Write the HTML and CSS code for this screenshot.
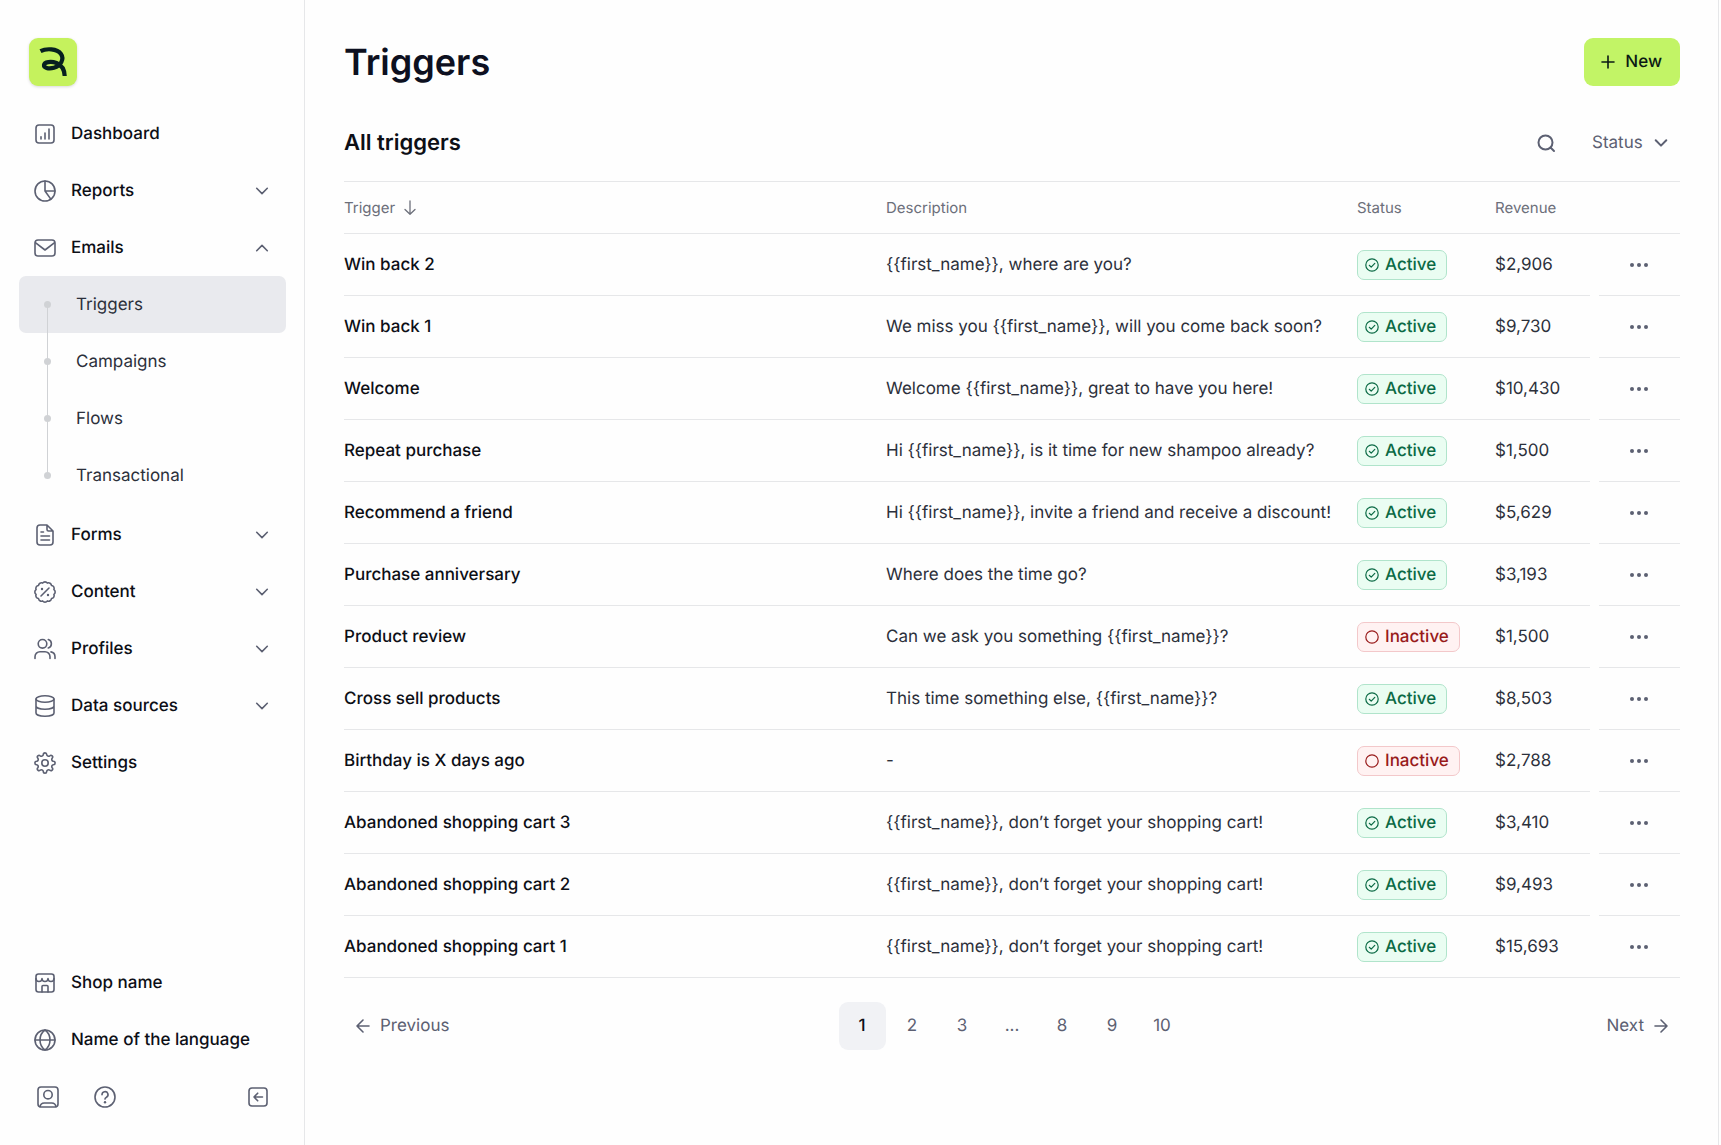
FILE: index.html
```
<!DOCTYPE html>
<html lang="en">
<head>
    <meta charset="UTF-8">
    <meta name="viewport" content="width=device-width, initial-scale=1.0">
    <title>Triggers</title>
    <link rel="stylesheet" href="styles.css">
</head>
<body>
    <!-- icon sprite -->
    <svg class="sprite" aria-hidden="true">
        <symbol id="i-dashboard" viewBox="0 0 24 24"><rect x="3" y="3" width="18" height="18" rx="3"/><path d="M8 14.8V17M12 11v6M16 7v10"/></symbol>
        <symbol id="i-reports" viewBox="0 0 24 24"><circle cx="12" cy="12" r="10"/><path d="M12 2v10h10M12 12l5.8 8.1"/></symbol>
        <symbol id="i-mail" viewBox="0 0 24 24"><rect x="2" y="4" width="20" height="16" rx="3"/><path d="M2.7 6.8 12 14l9.3-7.2"/></symbol>
        <symbol id="i-file" viewBox="0 0 24 24"><path d="M14 2H7a3 3 0 0 0-3 3v14a3 3 0 0 0 3 3h10a3 3 0 0 0 3-3V8zM14 2v4.5A1.5 1.5 0 0 0 15.5 8H20M8 9h2.5M8 13h8.5M8 17h8.5"/></symbol>
        <symbol id="i-percent" viewBox="0 0 24 24"><path d="M20.9 9.6A2.9 2.9 0 0 1 20.9 14.4A2.9 2.9 0 0 1 18.5 18.5A2.9 2.9 0 0 1 14.4 20.9A2.9 2.9 0 0 1 9.6 20.9A2.9 2.9 0 0 1 5.5 18.5A2.9 2.9 0 0 1 3.1 14.4A2.9 2.9 0 0 1 3.1 9.6A2.9 2.9 0 0 1 5.5 5.5A2.9 2.9 0 0 1 9.6 3.1A2.9 2.9 0 0 1 14.4 3.1A2.9 2.9 0 0 1 18.5 5.5A2.9 2.9 0 0 1 20.9 9.6zM8 16l8-8"/><path class="dots" d="M9 9h.01M15 15h.01"/></symbol>
        <symbol id="i-users" viewBox="0 0 24 24"><circle cx="9.5" cy="6.8" r="4.3"/><path d="M15.3 2.6a4.4 4.4 0 0 1 0 8.4M2 21.5v-1.8a5 5 0 0 1 5-5h5a5 5 0 0 1 5 5v1.8M18 14.9a5 5 0 0 1 4 4.8v1.8"/></symbol>
        <symbol id="i-database" viewBox="0 0 24 24"><ellipse cx="12" cy="5" rx="9" ry="3.2"/><path d="M3 5v14c0 1.800 4 3.200 9 3.200s9-1.400 9-3.200V5M3 12c0 1.800 4 3.200 9 3.200s9-1.400 9-3.200"/></symbol>
        <symbol id="i-gear" viewBox="0 0 24 24"><circle cx="12" cy="12" r="3.2"/><path d="M20.4 10.3A1.7 1.7 0 0 1 20.4 13.7A1.9 1.9 0 0 0 19.2 16.8A1.7 1.7 0 0 1 16.8 19.2A1.9 1.9 0 0 0 13.7 20.4A1.7 1.7 0 0 1 10.3 20.4A1.9 1.9 0 0 0 7.2 19.2A1.7 1.7 0 0 1 4.8 16.8A1.9 1.9 0 0 0 3.6 13.7A1.7 1.7 0 0 1 3.6 10.3A1.9 1.9 0 0 0 4.8 7.2A1.7 1.7 0 0 1 7.2 4.8A1.9 1.9 0 0 0 10.3 3.6A1.7 1.7 0 0 1 13.7 3.6A1.9 1.9 0 0 0 16.8 4.8A1.7 1.7 0 0 1 19.2 7.2A1.9 1.9 0 0 0 20.4 10.3z"/></symbol>
        <symbol id="i-shop" viewBox="0 0 24 24"><rect x="3" y="3" width="18" height="18" rx="2.5"/><path d="M3 7.500a3 3 0 0 0 6 0 3 3 0 0 0 6 0 3 3 0 0 0 6 0M9 21v-5.500a1 1 0 0 1 1-1h4a1 1 0 0 1 1 1V21"/></symbol>
        <symbol id="i-globe" viewBox="0 0 24 24"><circle cx="12" cy="12" r="10"/><path d="M2 12h20M12 2c3.500 2.500 5 6 5 10s-1.500 7.500-5 10c-3.500-2.500-5-6-5-10s1.500-7.500 5-10z"/></symbol>
        <symbol id="i-account" viewBox="0 0 24 24"><rect x="2" y="2" width="20" height="20" rx="3"/><circle cx="12" cy="9.7" r="4.2"/><path d="M4 21.700A4.500 4.500 0 0 1 8.200 18h7.600a4.500 4.500 0 0 1 4.200 3.700"/></symbol>
        <symbol id="i-help" viewBox="0 0 24 24"><circle cx="12" cy="12" r="10"/><path d="M9 9.700a3 3 0 1 1 4.500 2.500c-.9.500-1.500 1-1.500 1.900"/><path class="dots" d="M12 17.200h.01"/></symbol>
        <symbol id="i-collapse" viewBox="0 0 24 24"><rect x="3" y="3" width="18" height="18" rx="3"/><path d="M16.5 12H8M11.7 8.200 8 12l3.700 3.800"/></symbol>
        <symbol id="i-down" viewBox="0 0 24 24"><path d="M6.700 9.300 12 14.600l5.300-5.300"/></symbol>
        <symbol id="i-up" viewBox="0 0 24 24"><path d="M6.700 14.700 12 9.400l5.300 5.300"/></symbol>
        <symbol id="i-plus" viewBox="0 0 14 14"><path d="M7 1v12M1 7h12"/></symbol>
        <symbol id="i-search" viewBox="0 0 24 24"><circle cx="11.5" cy="11.5" r="7"/><path d="M16.5 16.5l3.500 3.500"/></symbol>
        <symbol id="i-sort" viewBox="0 0 14 16"><path d="M7 1v13M2 9.500 7 14.300l5-4.800"/></symbol>
        <symbol id="i-check" viewBox="0 0 14 14"><circle cx="7" cy="7" r="6.2"/><path d="M4.300 7.300l1.900 1.800 3.600-3.700"/></symbol>
        <symbol id="i-circle" viewBox="0 0 14 14"><circle cx="7" cy="7" r="6.2"/></symbol>
        <symbol id="i-more" viewBox="0 0 20 6"><circle cx="3" cy="3" r="2"/><circle cx="10" cy="3" r="2"/><circle cx="17" cy="3" r="2"/></symbol>
        <symbol id="i-left" viewBox="0 0 14 14"><path d="M13 7H1M7 1 1 7l6 6"/></symbol>
        <symbol id="i-right" viewBox="0 0 14 14"><path d="M1 7h12M7 1l6 6-6 6"/></symbol>
    </svg>

    <div class="app">
        <aside class="sidebar">
            <a class="logo" href="#" aria-label="Home">
                <svg viewBox="0 0 48 48"><path d="M11.500 13.200C17 10.300 28 10.300 32 16c3.500 5-.2 12-7 13.800-6 1.500-10.300-.3-10-2.800.4-3 7-4 12.500-2 5.500 2.200 8 7 8.200 13"/></svg>
            </a>
            <nav class="nav">
                <a class="nav-item" href="#"><svg class="icon"><use href="#i-dashboard"/></svg>Dashboard</a>
                <button class="nav-item" type="button"><svg class="icon"><use href="#i-reports"/></svg>Reports<svg class="icon chevron"><use href="#i-down"/></svg></button>
                <button class="nav-item" type="button" aria-expanded="true"><svg class="icon"><use href="#i-mail"/></svg>Emails<svg class="icon chevron"><use href="#i-up"/></svg></button>
                <div class="subnav">
                    <a class="sub-item selected" href="#">Triggers</a>
                    <a class="sub-item" href="#">Campaigns</a>
                    <a class="sub-item" href="#">Flows</a>
                    <a class="sub-item" href="#">Transactional</a>
                </div>
                <button class="nav-item" type="button"><svg class="icon"><use href="#i-file"/></svg>Forms<svg class="icon chevron"><use href="#i-down"/></svg></button>
                <button class="nav-item" type="button"><svg class="icon"><use href="#i-percent"/></svg>Content<svg class="icon chevron"><use href="#i-down"/></svg></button>
                <button class="nav-item" type="button"><svg class="icon"><use href="#i-users"/></svg>Profiles<svg class="icon chevron"><use href="#i-down"/></svg></button>
                <button class="nav-item" type="button"><svg class="icon"><use href="#i-database"/></svg>Data sources<svg class="icon chevron"><use href="#i-down"/></svg></button>
                <a class="nav-item" href="#"><svg class="icon"><use href="#i-gear"/></svg>Settings</a>
            </nav>
            <div class="sidebar-bottom">
                <button class="nav-item" type="button"><svg class="icon"><use href="#i-shop"/></svg>Shop name</button>
                <button class="nav-item" type="button"><svg class="icon"><use href="#i-globe"/></svg>Name of the language</button>
                <div class="tools">
                    <button class="tool" type="button" aria-label="Account"><svg class="icon"><use href="#i-account"/></svg></button>
                    <button class="tool" type="button" aria-label="Help"><svg class="icon"><use href="#i-help"/></svg></button>
                    <button class="tool collapse" type="button" aria-label="Collapse sidebar"><svg class="icon"><use href="#i-collapse"/></svg></button>
                </div>
            </div>
        </aside>

        <main class="main">
            <header class="page-header">
                <h1>Triggers</h1>
                <button class="btn-new" type="button"><svg class="icon-sm"><use href="#i-plus"/></svg>New</button>
            </header>

            <div class="toolbar">
                <h2>All triggers</h2>
                <button class="btn-search" type="button" aria-label="Search"><svg class="icon"><use href="#i-search"/></svg></button>
                <div class="filter">
                    <select aria-label="Filter by status">
                        <option>Status</option>
                        <option>Active</option>
                        <option>Inactive</option>
                    </select>
                    <svg class="icon"><use href="#i-down"/></svg>
                </div>
            </div>

            <table class="triggers">
                <thead>
                    <tr>
                        <th class="col-name"><button class="sort" type="button">Trigger<svg><use href="#i-sort"/></svg></button></th>
                        <th class="col-desc">Description</th>
                        <th class="col-status">Status</th>
                        <th class="col-revenue">Revenue</th>
                        <th class="col-menu"></th>
                    </tr>
                </thead>
                <tbody>
                    <tr>
                        <td class="name">Win back 2</td>
                        <td>{{first_name}}, where are you?</td>
                        <td><span class="badge active"><svg class="icon-sm"><use href="#i-check"/></svg>Active</span></td>
                        <td class="revenue">$2,906</td>
                        <td class="menu"><button type="button" aria-label="More"><svg><use href="#i-more"/></svg></button></td>
                    </tr>
                    <tr>
                        <td class="name">Win back 1</td>
                        <td>We miss you {{first_name}}, will you come back soon?</td>
                        <td><span class="badge active"><svg class="icon-sm"><use href="#i-check"/></svg>Active</span></td>
                        <td class="revenue">$9,730</td>
                        <td class="menu"><button type="button" aria-label="More"><svg><use href="#i-more"/></svg></button></td>
                    </tr>
                    <tr>
                        <td class="name">Welcome</td>
                        <td>Welcome {{first_name}}, great to have you here!</td>
                        <td><span class="badge active"><svg class="icon-sm"><use href="#i-check"/></svg>Active</span></td>
                        <td class="revenue">$10,430</td>
                        <td class="menu"><button type="button" aria-label="More"><svg><use href="#i-more"/></svg></button></td>
                    </tr>
                    <tr>
                        <td class="name">Repeat purchase</td>
                        <td>Hi {{first_name}}, is it time for new shampoo already?</td>
                        <td><span class="badge active"><svg class="icon-sm"><use href="#i-check"/></svg>Active</span></td>
                        <td class="revenue">$1,500</td>
                        <td class="menu"><button type="button" aria-label="More"><svg><use href="#i-more"/></svg></button></td>
                    </tr>
                    <tr>
                        <td class="name">Recommend a friend</td>
                        <td>Hi {{first_name}}, invite a friend and receive a discount!</td>
                        <td><span class="badge active"><svg class="icon-sm"><use href="#i-check"/></svg>Active</span></td>
                        <td class="revenue">$5,629</td>
                        <td class="menu"><button type="button" aria-label="More"><svg><use href="#i-more"/></svg></button></td>
                    </tr>
                    <tr>
                        <td class="name">Purchase anniversary</td>
                        <td>Where does the time go?</td>
                        <td><span class="badge active"><svg class="icon-sm"><use href="#i-check"/></svg>Active</span></td>
                        <td class="revenue">$3,193</td>
                        <td class="menu"><button type="button" aria-label="More"><svg><use href="#i-more"/></svg></button></td>
                    </tr>
                    <tr>
                        <td class="name">Product review</td>
                        <td>Can we ask you something {{first_name}}?</td>
                        <td><span class="badge inactive"><svg class="icon-sm"><use href="#i-circle"/></svg>Inactive</span></td>
                        <td class="revenue">$1,500</td>
                        <td class="menu"><button type="button" aria-label="More"><svg><use href="#i-more"/></svg></button></td>
                    </tr>
                    <tr>
                        <td class="name">Cross sell products</td>
                        <td>This time something else, {{first_name}}?</td>
                        <td><span class="badge active"><svg class="icon-sm"><use href="#i-check"/></svg>Active</span></td>
                        <td class="revenue">$8,503</td>
                        <td class="menu"><button type="button" aria-label="More"><svg><use href="#i-more"/></svg></button></td>
                    </tr>
                    <tr>
                        <td class="name">Birthday is X days ago</td>
                        <td>-</td>
                        <td><span class="badge inactive"><svg class="icon-sm"><use href="#i-circle"/></svg>Inactive</span></td>
                        <td class="revenue">$2,788</td>
                        <td class="menu"><button type="button" aria-label="More"><svg><use href="#i-more"/></svg></button></td>
                    </tr>
                    <tr>
                        <td class="name">Abandoned shopping cart 3</td>
                        <td>{{first_name}}, don’t forget your shopping cart!</td>
                        <td><span class="badge active"><svg class="icon-sm"><use href="#i-check"/></svg>Active</span></td>
                        <td class="revenue">$3,410</td>
                        <td class="menu"><button type="button" aria-label="More"><svg><use href="#i-more"/></svg></button></td>
                    </tr>
                    <tr>
                        <td class="name">Abandoned shopping cart 2</td>
                        <td>{{first_name}}, don’t forget your shopping cart!</td>
                        <td><span class="badge active"><svg class="icon-sm"><use href="#i-check"/></svg>Active</span></td>
                        <td class="revenue">$9,493</td>
                        <td class="menu"><button type="button" aria-label="More"><svg><use href="#i-more"/></svg></button></td>
                    </tr>
                    <tr>
                        <td class="name">Abandoned shopping cart 1</td>
                        <td>{{first_name}}, don’t forget your shopping cart!</td>
                        <td><span class="badge active"><svg class="icon-sm"><use href="#i-check"/></svg>Active</span></td>
                        <td class="revenue">$15,693</td>
                        <td class="menu"><button type="button" aria-label="More"><svg><use href="#i-more"/></svg></button></td>
                    </tr>
                </tbody>
            </table>

            <nav class="pagination" aria-label="Pagination">
                <a class="step" href="#"><svg class="icon-sm"><use href="#i-left"/></svg>Previous</a>
                <div class="pages">
                    <a class="page current" href="#">1</a>
                    <a class="page" href="#">2</a>
                    <a class="page" href="#">3</a>
                    <span class="page">...</span>
                    <a class="page" href="#">8</a>
                    <a class="page" href="#">9</a>
                    <a class="page" href="#">10</a>
                </div>
                <a class="step next" href="#">Next<svg class="icon-sm"><use href="#i-right"/></svg></a>
            </nav>
        </main>
    </div>
</body>
</html>
```

FILE: styles.css
```
* {
    box-sizing: border-box;
}
body {
    margin: 0;
    font-family: Inter, sans-serif;
    font-size: 17px;
    line-height: 24px;
    text-rendering: geometricPrecision;
    color: #2c303b;
    background-color: #fefefe;
}
button, select {
    font: inherit;
    color: inherit;
    text-rendering: inherit;
    background: none;
    border: none;
    margin: 0;
    padding: 0;
    cursor: pointer;
}
a {
    color: inherit;
    text-decoration: none;
}
svg {
    display: block;
    flex-shrink: 0;
    fill: none;
    stroke: currentColor;
    stroke-width: 1.6;
    stroke-linecap: round;
    stroke-linejoin: round;
}
.sprite {
    position: absolute;
    width: 0;
    height: 0;
}
.dots {
    stroke-width: 2.4;
}
.icon {
    width: 24px;
    height: 24px;
    color: #5c6072;
}
.icon-sm {
    width: 14px;
    height: 14px;
}
.app {
    display: flex;
    min-height: 100vh;
    margin-right: 2px;
    border-right: 1px solid #e6e7e9;
}

/* sidebar */
.sidebar {
    display: flex;
    flex-direction: column;
    flex-shrink: 0;
    width: 305px;
    padding: 38px 18px 20px 19px;
    border-right: 1px solid #e6e7e9;
}
.logo {
    width: 48px;
    height: 48px;
    margin: 0 0 19px 10px;
    border-radius: 9px;
    background-color: #c5f25d;
    box-shadow: 0 1px 3px rgba(0, 0, 0, 0.15);
}
.logo svg {
    color: #06201f;
    stroke-width: 4.2;
    stroke-linecap: butt;
}
.nav-item {
    display: flex;
    align-items: center;
    gap: 14px;
    width: 100%;
    height: 57px;
    padding: 0 12px 0 14px;
    border-radius: 7px;
    font-weight: 500;
    color: #0d0f16;
    text-align: left;
}
.chevron {
    margin-left: auto;
}
.subnav {
    padding-bottom: 2px;
}
.sub-item {
    position: relative;
    display: flex;
    align-items: center;
    height: 57px;
    padding-left: 57px;
    border-radius: 7px;
}
.sub-item.selected {
    background-color: #e9eaee;
}
.sub-item::before {
    content: "";
    position: absolute;
    left: 25px;
    top: 25px;
    width: 7px;
    height: 7px;
    border-radius: 50%;
    background-color: #d0d2d5;
}
.sub-item:not(:last-child)::after {
    content: "";
    position: absolute;
    left: 28px;
    top: 28px;
    z-index: 1;
    width: 1px;
    height: 57px;
    background-color: #d0d2d5;
}
.sidebar-bottom {
    margin-top: auto;
}
.tools {
    display: flex;
}
.tool {
    display: flex;
    align-items: center;
    justify-content: center;
    width: 57px;
    height: 57px;
}
.collapse {
    margin-left: auto;
}

/* main column */
.main {
    flex: 1;
    min-width: 0;
    padding: 38px 38px 38px 39px;
}
.page-header {
    display: flex;
    align-items: center;
    justify-content: space-between;
    height: 48px;
    margin-bottom: 19px;
}
h1 {
    margin: 0;
    font-size: 36px;
    line-height: 48px;
    font-weight: 600;
    color: #0d1020;
}
.btn-new {
    display: flex;
    align-items: center;
    gap: 10px;
    height: 48px;
    padding: 0 18px 0 17px;
    border-radius: 9px;
    background-color: #c2f466;
    font-weight: 500;
    color: #0b1a14;
}
.toolbar {
    display: flex;
    align-items: center;
    height: 76px;
}
h2 {
    margin: 0 auto 0 0;
    font-size: 22px;
    line-height: 28px;
    font-weight: 600;
    color: #0d0f16;
}
.btn-search {
    margin-right: 34px;
}
.btn-search svg, .filter svg {
    stroke-width: 2;
}
.filter {
    position: relative;
    color: #5c6072;
}
.filter select {
    width: 88px;
    height: 48px;
    appearance: none;
}
.filter svg {
    position: absolute;
    top: 12px;
    right: 7px;
    pointer-events: none;
}

/* table */
.triggers {
    width: 100%;
    border-spacing: 0;
    border-top: 1px solid #e6e7e9;
}
.triggers th {
    height: 52px;
    padding: 0;
    border-bottom: 1px solid #e6e7e9;
    font-size: 15px;
    font-weight: 400;
    color: #6c6f7a;
    text-align: left;
}
.triggers td {
    height: 62px;
    padding: 0;
    border-bottom: 1px solid #e6e7e9;
}
.col-desc {
    width: 471px;
}
.col-status {
    width: 138px;
}
.col-revenue {
    width: 104px;
}
.col-menu {
    width: 81px;
}
.sort {
    display: flex;
    align-items: center;
    gap: 8px;
}
.sort svg {
    width: 14px;
    height: 16px;
    stroke-width: 1.3;
}
.triggers .name {
    font-weight: 500;
    color: #0d0f16;
}
.revenue {
    position: relative;
}
/* gap in the row line before the menu column */
tr:not(:last-child) .revenue::after {
    content: "";
    position: absolute;
    right: 0;
    bottom: -1px;
    width: 9px;
    height: 1px;
    background-color: #fefefe;
}
.menu button {
    display: flex;
    align-items: center;
    justify-content: center;
    width: 80px;
    height: 48px;
}
.menu svg {
    width: 20px;
    height: 6px;
    color: #5c6072;
    fill: currentColor;
    stroke: none;
}
.badge {
    display: inline-flex;
    align-items: center;
    gap: 6px;
    height: 30px;
    padding: 0 10px 0 7px;
    border: 1px solid;
    border-radius: 7px;
    font-weight: 500;
    vertical-align: middle;
}
.badge svg {
    stroke-width: 1.2;
}
.active {
    color: #0b6a45;
    background-color: #eafdf2;
    border-color: #b0e4cb;
}
.inactive {
    color: #981b1b;
    background-color: #fff2f2;
    border-color: #f3c8ca;
}

/* pagination */
.pagination {
    display: grid;
    grid-template-columns: 1fr auto 1fr;
    align-items: center;
    margin-top: 24px;
    color: #5c6072;
}
.pages {
    display: flex;
    gap: 3px;
}
.page {
    display: flex;
    align-items: center;
    justify-content: center;
    width: 47px;
    height: 48px;
    border-radius: 9px;
}
.page.current {
    background-color: #f1f2f5;
    font-weight: 500;
    color: #0d0f16;
}
.step {
    display: flex;
    align-items: center;
    gap: 10px;
    justify-self: start;
    padding: 0 12px;
}
.step.next {
    justify-self: end;
}
```
